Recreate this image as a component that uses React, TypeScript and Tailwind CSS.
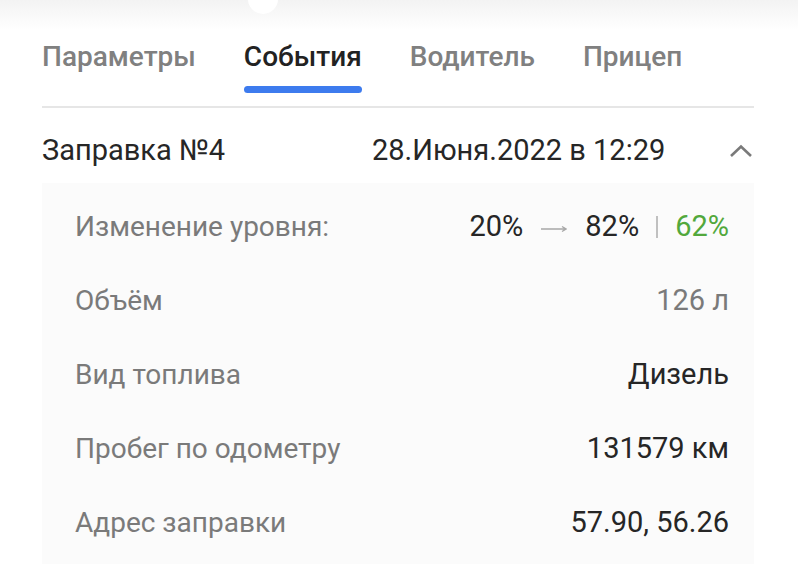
import React from "react";

const rows = [
  { label: "Объём", value: "126 л", muted: true },
  { label: "Вид топлива", value: "Дизель" },
  { label: "Пробег по одометру", value: "131579 км" },
  { label: "Адрес заправки", value: "57.90, 56.26" },
];

const tabs = ["Параметры", "События", "Водитель", "Прицеп"];

export default function App() {
  return (
    <div className="w-[798px] h-[564px] overflow-hidden bg-white font-['Roboto',sans-serif]">
      {/* top handle strip */}
      <div className="h-[30px] bg-gradient-to-b from-[#f3f3f3] to-white flex">
        <div className="ml-[248px] -mt-[16px] w-[30px] h-[30px] rounded-full bg-white"></div>
      </div>

      <div className="px-[42px] w-[796px]">
        <div className="flex gap-[48px] pt-[11px]">
          {tabs.map((t, i) => (
            <div key={t} className="flex flex-col">
              <span
                className={
                  i === 1
                    ? "text-[28px] leading-[32px] font-medium text-[#222]"
                    : "text-[28px] leading-[32px] font-medium text-[#808080]"
                }
              >
                {t}
              </span>
              <div
                className={
                  i === 1
                    ? "mt-[13px] h-[7px] rounded-full bg-[#3d7bee]"
                    : "mt-[13px] h-[7px]"
                }
              ></div>
            </div>
          ))}
        </div>
        <div className="mt-[13px] h-[2px] bg-[#e6e6e6] w-[712px]"></div>

        <div className="w-[712px] flex items-center h-[75px] pt-[10px] text-[29px] text-[#262626]">
          <span className="w-[330px]">Заправка №4</span>
          <span>28.Июня.2022 в 12:29</span>
          <svg className="ml-auto mr-[1px]" width="24" height="14" viewBox="0 0 24 14">
            <path d="M2 12 L12 2.5 L22 12" fill="none" stroke="#7a7a7a" strokeWidth="2.6" />
          </svg>
        </div>

        <div className="w-[712px] h-[400px] bg-[#fbfbfb] pt-[7px] pl-[33px] pr-[25px] text-[28px]">
          <div className="h-[74px] flex items-center justify-between">
            <span className="text-[#7a7a7a]">Изменение уровня:</span>
            <span className="flex items-center text-[29px] text-[#262626]">
              20%
              <svg className="mx-[18px] mt-[4px]" width="26" height="8" viewBox="0 0 26 8">
                <path d="M0 4 H25 M21 1.5 L25 4 L21 6.5" fill="none" stroke="#a8a8a8" strokeWidth="1.3" />
              </svg>
              82%
              <span className="mx-[17px] w-[2px] h-[22px] bg-[#c0c0c0]"></span>
              <span className="text-[#52a83c]">62%</span>
            </span>
          </div>
          {rows.map((r) => (
            <div key={r.label} className="h-[74px] flex items-center justify-between">
              <span className="text-[#7a7a7a]">{r.label}</span>
              <span className={r.muted ? "text-[29px] text-[#7a7a7a]" : "text-[29px] text-[#262626]"}>{r.value}</span>
            </div>
          ))}
        </div>
      </div>
    </div>
  );
}
